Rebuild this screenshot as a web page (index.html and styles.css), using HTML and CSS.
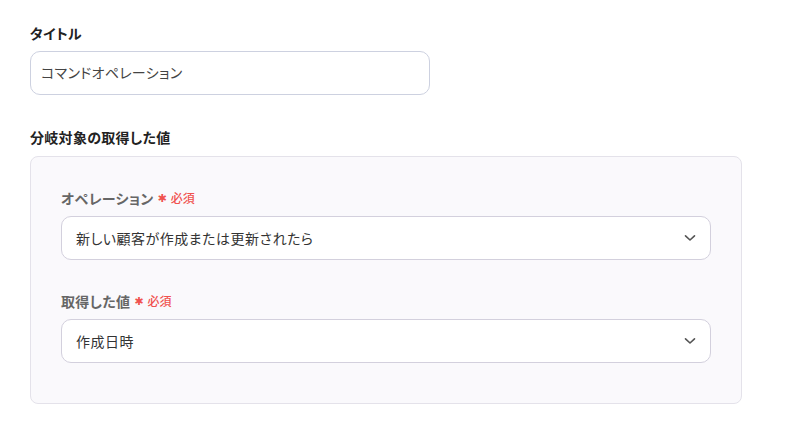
FILE: index.html
```html
<!DOCTYPE html>
<html lang="ja">
<head>
<meta charset="utf-8">
<link rel="stylesheet" href="styles.css">
</head>
<body>
<div class="form">
  <div class="field">
    <div class="label">タイトル</div>
    <div class="input">コマンドオペレーション</div>
  </div>
  <div class="field group">
    <div class="label">分岐対象の取得した値</div>
    <div class="panel">
      <div class="subfield">
        <div class="sublabel">オペレーション<span class="req"><span class="star">✱</span>必須</span></div>
        <div class="select"><span>新しい顧客が作成または更新されたら</span>
          <svg class="chev" width="12" height="8" viewBox="0 0 12 8"><path d="M1.5 1.8 L6 6 L10.5 1.8" fill="none" stroke="#555" stroke-width="1.6" stroke-linecap="round" stroke-linejoin="round"/></svg>
        </div>
      </div>
      <div class="subfield">
        <div class="sublabel">取得した値<span class="req"><span class="star">✱</span>必須</span></div>
        <div class="select"><span>作成日時</span>
          <svg class="chev" width="12" height="8" viewBox="0 0 12 8"><path d="M1.5 1.8 L6 6 L10.5 1.8" fill="none" stroke="#555" stroke-width="1.6" stroke-linecap="round" stroke-linejoin="round"/></svg>
        </div>
      </div>
    </div>
  </div>
</div>
</body>
</html>
```
FILE: styles.css
```css
html, body {
  margin: 0;
  padding: 0;
  background: #ffffff;
}
body {
  font-family: "Noto Sans CJK JP", "Noto Sans", sans-serif;
  font-feature-settings: "palt";
  color: #333;
}
.form {
  padding: 23px 0 0 30px;
  width: 712px;
  display: flex;
  flex-direction: column;
  gap: 32px;
}
.field {
  display: flex;
  flex-direction: column;
}
.label {
  font-size: 14px;
  font-weight: 700;
  line-height: 20px;
  color: #222;
  margin-bottom: 8px;
  letter-spacing: 0.3px;
}
.group .label {
  margin-bottom: 9px;
}
.input {
  width: 400px;
  height: 44px;
  box-sizing: border-box;
  border: 1px solid #cdd1e0;
  border-radius: 10px;
  padding: 0 10px 2px;
  display: flex;
  align-items: center;
  font-size: 14px;
  color: #444;
  letter-spacing: 0.3px;
}
.panel {
  background: #faf9fc;
  border: 1px solid #e4e2ea;
  border-radius: 8px;
  padding: 31px 30px 40px 30px;
  display: flex;
  flex-direction: column;
  gap: 31px;
}
.subfield {
  display: flex;
  flex-direction: column;
}
.sublabel {
  font-size: 14px;
  font-weight: 700;
  line-height: 20px;
  color: #666;
  margin-bottom: 8px;
  display: flex;
  align-items: center;
  letter-spacing: 0.3px;
}
.req {
  color: #f0524f;
  font-size: 12px;
  font-weight: 500;
  margin-left: 4px;
  display: inline-flex;
  align-items: center;
  letter-spacing: 0;
}
.star {
  font-family: "DejaVu Sans", sans-serif;
  font-size: 11px;
  margin-right: 4px;
  position: relative;
  top: 1px;
}
.select {
  height: 44px;
  box-sizing: border-box;
  background: #fff;
  border: 1px solid #d3d0dd;
  border-radius: 10px;
  padding: 0 14px 0 14px;
  display: flex;
  align-items: center;
  justify-content: space-between;
  font-size: 14px;
  color: #333;
  letter-spacing: 0.5px;
}
.chev {
  display: block;
}
```
